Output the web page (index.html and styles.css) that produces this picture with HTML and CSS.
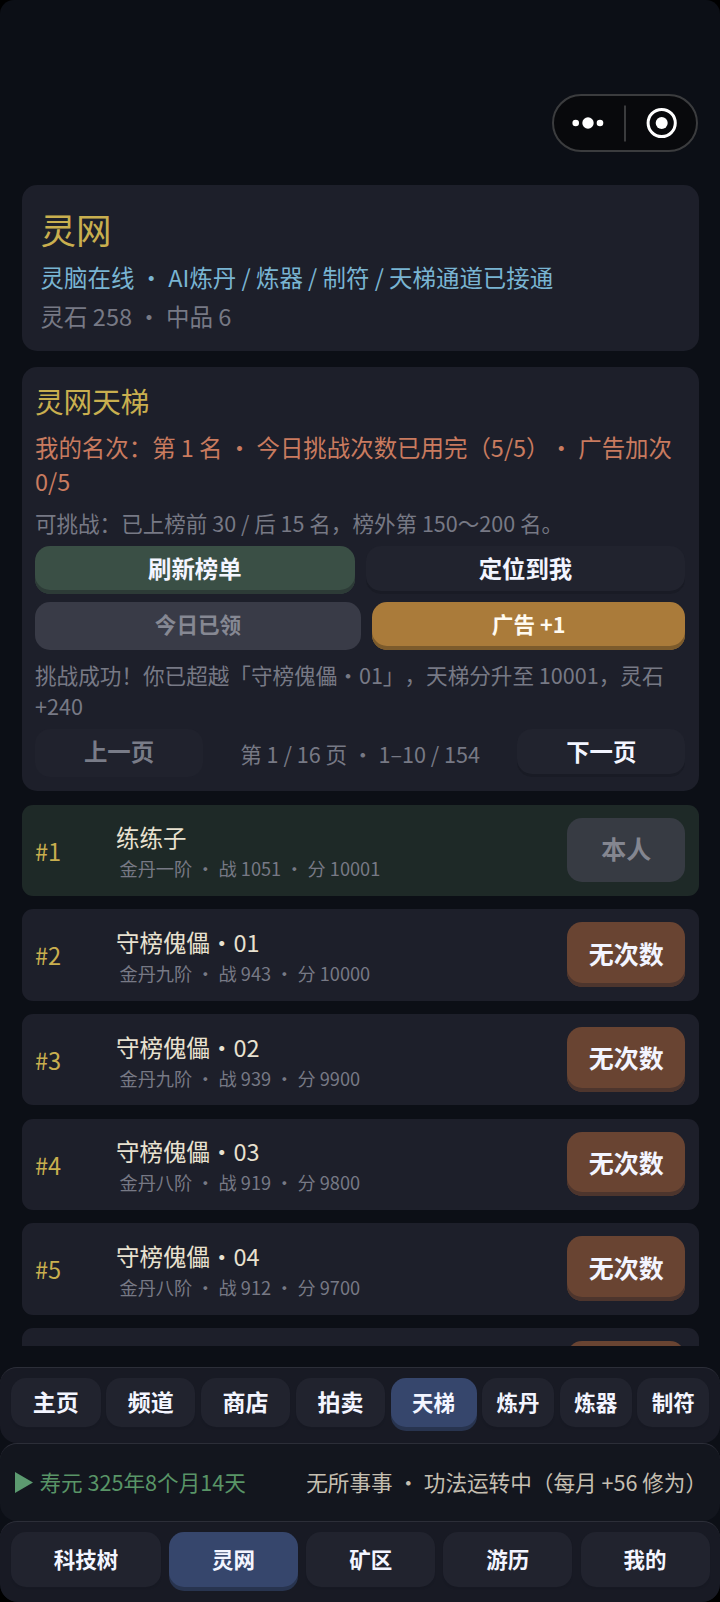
FILE: index.html
```html
<!DOCTYPE html>
<html lang="zh-CN">
<head>
<meta charset="utf-8">
<title>灵网天梯</title>
<link rel="stylesheet" href="styles.css">
</head>
<body>
<div class="app">
  <header class="topbar">
    <svg class="capsule" width="146" height="58" viewBox="0 0 146 58">
      <rect class="capsule-body" x="1" y="1" width="144" height="56" rx="28"/>
      <path class="capsule-line" d="M73 11.5V47.5"/>
      <g class="capsule-mark"><circle cx="23.7" cy="29" r="3.3"/><circle cx="36" cy="29" r="5.7"/><circle cx="48" cy="29" r="3.3"/><circle cx="109.7" cy="29" r="6"/></g>
      <circle class="capsule-ring" cx="109.7" cy="29" r="13.6"/>
    </svg>
  </header>

  <main class="content">
    <section class="card intro">
      <h1 class="intro-title">灵网</h1>
      <p class="intro-status">灵脑在线 ・ AI炼丹 / 炼器 / 制符 / 天梯通道已接通</p>
      <p class="intro-coins">灵石 258 ・ 中品 6</p>
    </section>

    <section class="card ladder">
      <h2 class="ladder-title">灵网天梯</h2>
      <p class="ladder-rank">我的名次：第 1 名 ・ 今日挑战次数已用完（5/5）・ 广告加次 0/5</p>
      <p class="ladder-hint">可挑战：已上榜前 30 / 后 15 名，榜外第 150～200 名。</p>
      <div class="actions actions-even">
        <button class="btn green">刷新榜单</button>
        <button class="btn dark">定位到我</button>
      </div>
      <div class="actions actions-ad">
        <button class="btn small off">今日已领</button>
        <button class="btn small gold">广告 +1</button>
      </div>
      <p class="ladder-result">挑战成功！你已超越「守榜傀儡・01」，天梯分升至 10001，灵石 +240</p>
      <div class="pager">
        <button class="btn dark faded">上一页</button>
        <span class="pager-info">第 1 / 16 页 ・ 1–10 / 154</span>
        <button class="btn dark">下一页</button>
      </div>
    </section>

    <ul class="ranks">
      <li class="rank self"><span class="num">#1</span><div class="who"><div class="name">练练子</div><div class="meta">金丹一阶 ・ 战 1051 ・ 分 10001</div></div><button class="btn fight off">本人</button></li>
      <li class="rank"><span class="num">#2</span><div class="who"><div class="name">守榜傀儡・01</div><div class="meta">金丹九阶 ・ 战 943 ・ 分 10000</div></div><button class="btn fight">无次数</button></li>
      <li class="rank"><span class="num">#3</span><div class="who"><div class="name">守榜傀儡・02</div><div class="meta">金丹九阶 ・ 战 939 ・ 分 9900</div></div><button class="btn fight">无次数</button></li>
      <li class="rank"><span class="num">#4</span><div class="who"><div class="name">守榜傀儡・03</div><div class="meta">金丹八阶 ・ 战 919 ・ 分 9800</div></div><button class="btn fight">无次数</button></li>
      <li class="rank"><span class="num">#5</span><div class="who"><div class="name">守榜傀儡・04</div><div class="meta">金丹八阶 ・ 战 912 ・ 分 9700</div></div><button class="btn fight">无次数</button></li>
      <li class="rank"><span class="num"></span><div class="who"></div><button class="btn fight" aria-label="挑战"></button></li>
    </ul>
  </main>

  <nav class="bar subnav">
    <button class="tab large">主页</button>
    <button class="tab large">频道</button>
    <button class="tab large">商店</button>
    <button class="tab large">拍卖</button>
    <button class="tab active">天梯</button>
    <button class="tab">炼丹</button>
    <button class="tab">炼器</button>
    <button class="tab">制符</button>
  </nav>

  <div class="bar status">
    <span class="life"><svg class="play" width="18" height="21" viewBox="0 0 18 21"><path d="M0 0L18 10.5L0 21Z"/></svg>寿元 325年8个月14天</span>
    <span class="doing">无所事事 ・ 功法运转中（每月 +56 修为）</span>
  </div>

  <nav class="bar mainnav">
    <button class="tab">科技树</button>
    <button class="tab active">灵网</button>
    <button class="tab">矿区</button>
    <button class="tab">游历</button>
    <button class="tab">我的</button>
  </nav>
</div>
</body>
</html>
```
FILE: styles.css
```css
* { box-sizing: border-box; }

body {
  margin: 0;
  background: #000;
  font-family: "Noto Sans CJK SC", sans-serif;
  font-weight: 400;
  text-spacing-trim: space-all;
  color: #e8e1d0;
}

h1, h2, p, ul { margin: 0; padding: 0; font-weight: 400; }

button {
  padding: 0;
  border: 0;
  font-family: inherit;
  font-weight: 700;
  color: #f3f5ff;
}

.app {
  width: 720px;
  height: 1602px;
  display: flex;
  flex-direction: column;
  overflow: hidden;
  background: #0c0f16;
  border-radius: 14px 14px 18px 18px;
}

.topbar {
  height: 185px;
  flex: none;
  display: flex;
  justify-content: flex-end;
  align-items: flex-start;
  padding: 94px 22px 0 0;
}
.capsule-body { fill: #08090c; stroke: #3b3c3e; stroke-width: 2; }
.capsule-line { stroke: #3a3b3d; stroke-width: 2; }
.capsule-mark { fill: #fff; }
.capsule-ring { fill: none; stroke: #fff; stroke-width: 3; }

.content {
  height: 1161px;
  flex: none;
  padding: 0 21.4px 0 21.6px;
  overflow: hidden;
}

.card { background: #1d1f2a; border-radius: 15px; }

.intro { height: 165.7px; padding: 17px 19px; }
.intro-title { font-size: 35.5px; line-height: 53px; color: #c9af4f; }
.intro-status { margin-top: 1.5px; font-size: 23.45px; line-height: 40px; color: #79b4d2; }
.intro-coins { font-size: 23.5px; line-height: 38px; color: #777985; }

.ladder {
  height: 424px;
  margin-top: 16px;
  padding: 13px 13.4px 0;
}
.ladder-title { font-size: 28.6px; line-height: 42px; color: #c9af4f; }
.ladder-rank { margin-top: 8px; font-size: 23.45px; line-height: 34px; color: #c97b5f; }
.ladder-hint { margin-top: 8px; font-size: 21.55px; line-height: 34px; color: #777985; }
.ladder-result { margin-top: 8.5px; margin-right: -4px; font-size: 21.6px; line-height: 31px; color: #777985; }

.actions { display: grid; gap: 11px; }
.actions-even { grid-template-columns: 1fr 1fr; margin-top: 6px; }
.actions-ad { grid-template-columns: 326px 1fr; margin-top: 8.5px; }

.btn {
  height: 48px;
  padding-bottom: 4px;
  border-radius: 15px;
  font-size: 23.4px;
  line-height: 44px;
}
.small { font-size: 21.6px; }
.green { background: #3a4f45; box-shadow: inset 0 -4px #2d3b37; }
.dark { background: #21232e; box-shadow: inset 0 -3px #191b25; }
.gold { background: #aa7b3a; box-shadow: inset 0 -4px #7c5b2c; color: #fffaf0; }
.off { background: #393b47; color: #868893; }
.faded { background: #20222d; box-shadow: none; color: #797c88; }

.pager {
  display: grid;
  grid-template-columns: 168px 1fr 168px;
  margin-top: 8.5px;
}
.pager .btn { line-height: 43px; }
.pager-info { text-align: center; font-size: 21.6px; line-height: 49px; color: #777985; }

.ranks { list-style: none; margin-top: 14px; display: grid; gap: 13.3px; }
.rank {
  display: grid;
  grid-template-columns: 81px 1fr 118px;
  height: 91.4px;
  padding: 13px 13.4px 0;
  border-radius: 11px;
  background: #1d1f2a;
}
.self { background: #1e2927; }
.num { font-size: 23.6px; line-height: 66px; color: #c9af4f; }
.name { font-size: 23.5px; line-height: 34px; margin-top: 2.5px; }
.meta { font-size: 18.2px; line-height: 28px; padding-left: 3.5px; color: #777985; }
.fight {
  height: 64.5px;
  font-size: 25px;
  line-height: 60px;
  background: #694432;
  box-shadow: inset 0 -4px #4d352d;
}
.fight.off { height: 64px; background: #373b43; box-shadow: none; color: #848690; }

.bar {
  flex: none;
  background: #181a24;
  border-top: 1.5px solid #2c2e38;
  border-radius: 17px;
}
.subnav {
  height: 75.5px;
  margin-top: 21px;
  padding: 10px 10.5px 0 11px;
  display: grid;
  grid-template-columns: repeat(4, 89.5px) 86px repeat(3, 72.2px);
  justify-content: space-between;
}
.tab {
  height: 49px;
  border-radius: 15px;
  background: #21232e;
  box-shadow: 0 2px 1px #171923;
  font-size: 21.5px;
  line-height: 48px;
}
.subnav .tab { padding-bottom: 2px; line-height: 47px; }
.large { font-size: 23px; }
.tab.active { background: #36466c; box-shadow: 0 4px #28344f; }

.status {
  height: 78.5px;
  padding: 0 13px 2px 15px;
  display: flex;
  justify-content: space-between;
  align-items: center;
  background: #13161e;
  font-size: 21.6px;
}
.life { display: flex; align-items: center; gap: 6.5px; color: #599567; }
.play { margin-top: 2px; fill: #5c9a70; }
.doing { color: #c5bfb1; }

.mainnav {
  height: 81px;
  padding: 10px 10.5px 0 11px;
  display: grid;
  grid-template-columns: 150px repeat(4, 129px);
  justify-content: space-between;
}
.mainnav .tab { height: 54.5px; line-height: 54px; }
```
